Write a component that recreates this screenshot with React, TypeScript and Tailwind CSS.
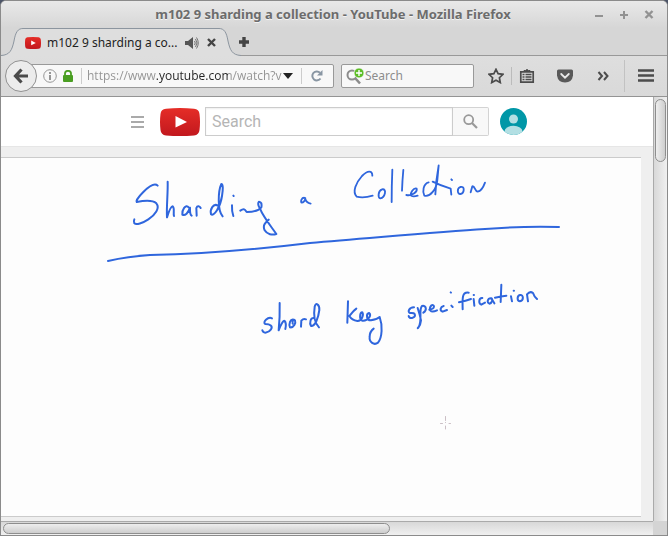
import type { ReactNode } from "react";

const ui = "font-['Noto_Sans','Open_Sans',sans-serif]";

function WindowButton({ label, children }: { label: string; children: ReactNode }) {
  return (
    <button type="button" aria-label={label} className="flex size-4 items-center justify-center">
      <svg width="12" height="12" viewBox="0 0 12 12" fill="none" stroke="#929292" strokeWidth="2">
        {children}
      </svg>
    </button>
  );
}

function TitleBar() {
  return (
    <header className="flex h-[27px] items-center bg-linear-to-b from-[#e9e9e9] to-[#d6d6d6] pr-2.5">
      <h1 className="min-w-0 flex-1 truncate pl-[74px] text-center text-[13px] font-bold text-[#6c6c6c] [text-shadow:0_1px_0_#f4f4f4]">
        m102 9 sharding a collection - YouTube - Mozilla Firefox
      </h1>
      <div className="flex gap-[9px]">
        <WindowButton label="Minimize">
          <path d="M2 7h8" />
        </WindowButton>
        <WindowButton label="Maximize">
          <path d="M2 6h8M6 2v8" />
        </WindowButton>
        <WindowButton label="Close">
          <path d="M2.500 2l7 7M9.500 2l-7 7" strokeWidth="2.400" />
        </WindowButton>
      </div>
    </header>
  );
}

function PlayBadge({ className }: { className: string }) {
  return (
    <svg className={className} viewBox="0 0 40 28" preserveAspectRatio="none" aria-hidden="true">
      <defs>
        <linearGradient id="badge" x1="0" y1="0" x2="0" y2="1">
          <stop offset="0" stopColor="#e52d27" />
          <stop offset="1" stopColor="#c2181e" />
        </linearGradient>
      </defs>
      <path
        d="M6 .7Q20-.5 34 .7Q39 1 39.500 6Q40.500 14 39.500 22Q39 27 34 27.400Q20 28.500 6 27.400Q1 27 .5 22Q-.5 14 .5 6Q1 1 6 .7Z"
        fill="url(#badge)"
      />
      <path d="M15.500 8L27 14L15.500 19.500Z" fill="#fff" />
    </svg>
  );
}

function TabStrip() {
  return (
    <div className="flex h-7 items-end border-b border-[#999] bg-[#d6d6d6]">
      <div className="-mb-px flex h-7 items-stretch">
        <svg width="22" height="28" viewBox="0 0 22 28" aria-hidden="true">
          <path d="M0 27.500C9 27 11 22 13 13C14.500 4 17 .5 22 .5V28H0Z" fill="#dedede" />
          <path d="M0 27.500C9 27 11 22 13 13C14.500 4 17 .5 22 .5" fill="none" stroke="#8c959f" />
        </svg>
        <div className="flex w-[196px] items-center border-t border-[#8c959f] bg-[#dedede] pl-0.5">
          <PlayBadge className="h-3 w-4 shrink-0" />
          <span className="ml-1.5 w-[132px] shrink-0 truncate text-xs text-[#222]">m102 9 sharding a co...</span>
          <button type="button" aria-label="Mute tab" className="ml-1.5 shrink-0">
            <svg width="14" height="14" viewBox="0 0 14 14" fill="none" stroke="#666">
              <path d="M0 5h3l5-4v12L3 9H0Z" fill="#555" stroke="none" />
              <path d="M9.500 5q1.500 2 0 4M10.500 3q3 4 0 8M11.500 1.500q3.500 5.500 0 11" strokeWidth=".9" />
            </svg>
          </button>
          <button type="button" aria-label="Close tab" className="ml-2 shrink-0">
            <svg width="9" height="9" viewBox="0 0 9 9" stroke="#444" strokeWidth="2.400">
              <path d="M1 1l7 7M8 1L1 8" />
            </svg>
          </button>
        </div>
        <svg width="22" height="28" viewBox="0 0 22 28" aria-hidden="true">
          <path d="M22 27.500C13 27 11 22 9 13C7.500 4 5 .5 0 .5V28H22Z" fill="#dedede" />
          <path d="M22 27.500C13 27 11 22 9 13C7.500 4 5 .5 0 .5" fill="none" stroke="#8c959f" />
        </svg>
      </div>
      <button type="button" aria-label="New tab" className="-ml-0.5 mb-2">
        <svg width="10" height="10" viewBox="0 0 10 10" stroke="#444" strokeWidth="3.400">
          <path d="M5 0v10M0 5h10" />
        </svg>
      </button>
    </div>
  );
}

function ToolButton({ label, className, children }: { label: string; className: string; children: ReactNode }) {
  return (
    <button type="button" aria-label={label} className={className}>
      <svg width="16" height="16" viewBox="0 0 16 16" fill="none" stroke="#4c4c4c">
        {children}
      </svg>
    </button>
  );
}

function Toolbar() {
  return (
    <nav className="flex h-[41px] items-center border-b border-[#949494] bg-linear-to-b from-[#dedede] to-[#d9d9d9] pr-[13px] pl-1">
      <button
        type="button"
        aria-label="Back"
        className="z-10 flex size-8 shrink-0 items-center justify-center rounded-full border border-[#919191] bg-[#ececec]"
      >
        <svg width="16" height="16" viewBox="0 0 16 16" fill="none" stroke="#4a4a4a" strokeWidth="3.200">
          <path d="M8.500 1.500L2.500 8l6 6.500M3 8h12" />
        </svg>
      </button>
      <div className="-ml-2 flex h-6 min-w-0 flex-1 items-center rounded-r-xs border border-[#999] bg-[#f8f8f8] pl-[13px]">
        <button type="button" aria-label="Site information" className="shrink-0">
          <svg width="14" height="14" viewBox="0 0 14 14" fill="none" stroke="#969696">
            <circle cx="7" cy="7" r="6.300" />
            <path d="M7 6v5M7 3v2" strokeWidth="2" />
          </svg>
        </button>
        <svg className="ml-1.5 shrink-0" width="10" height="12" viewBox="0 0 10 12" aria-hidden="true">
          <path d="M2 6V3.500a3 2.700 0 0 1 6 0V6" fill="none" stroke="#4a9e22" strokeWidth="1.800" />
          <rect y="5" width="10" height="7" rx="1" fill="#4a9e22" />
        </svg>
        <span className="mr-[5px] ml-2 h-4 w-px shrink-0 bg-[#ccc]" />
        <input
          aria-label="Address"
          readOnly
          value="https://www.youtube.com/watch?v"
          className="min-w-0 flex-1 bg-[linear-gradient(90deg,#929292_69px,#222_69px,#222_141px,#929292_141px)] bg-clip-text font-['Open_Sans','Noto_Sans',sans-serif] text-xs text-transparent outline-none"
        />
        <button type="button" aria-label="Show history" className="shrink-0">
          <svg width="10" height="6" viewBox="0 0 10 6">
            <path d="M0 0h10L5 6Z" fill="#222" />
          </svg>
        </button>
        <span className="mr-[9px] ml-2 h-4 w-px shrink-0 bg-[#ccc]" />
        <button type="button" aria-label="Reload" className="mr-2.5 shrink-0">
          <svg width="12" height="12" viewBox="0 0 12 12" fill="none" stroke="#8996a3" strokeWidth="2">
            <path d="M9.500 8.500A4.500 4.500 0 1 1 9 2.700" />
            <path d="M11.500 0v5.500H6Z" fill="#8996a3" stroke="none" />
          </svg>
        </button>
      </div>
      <label className="ml-[7px] flex h-6 w-[133px] shrink-0 items-center rounded-xs border border-[#999] bg-[#f8f8f8] pl-1">
        <svg width="18" height="17" viewBox="0 0 18 17" fill="none" aria-hidden="true">
          <path d="M9.500 10.500L14 15.500" stroke="#8c8c8c" strokeWidth="2.600" />
          <circle cx="6" cy="7" r="4.500" stroke="#8c8c8c" strokeWidth="2" />
          <circle cx="13" cy="5" r="5" fill="#5cbd25" stroke="#f8f8f8" strokeWidth=".8" />
          <path d="M13 2v6M10 5h6" stroke="#fff" strokeWidth="1.400" />
        </svg>
        <input
          aria-label="Search the web"
          placeholder="Search"
          className="min-w-0 flex-1 pl-px text-xs outline-none placeholder:text-[#8d8d8d]"
        />
      </label>
      <ToolButton label="Bookmark this page" className="ml-3.5 shrink-0">
        <path d="M8 1.300l2.100 4.400 4.900.6-3.600 3.400.9 4.900L8 12.300l-4.300 2.300.9-4.900L1 6.300l4.900-.6Z" strokeWidth="1.700" />
      </ToolButton>
      <span className="mx-[7px] h-[18px] w-px shrink-0 bg-[#bbb]" />
      <ToolButton label="Bookmarks" className="shrink-0">
        <path d="M1.800 3.800h12.400v10.400H1.800Z" strokeWidth="1.700" />
        <path d="M5 4V2.500h1.500Q8 .5 9.500 2.500H11V4" fill="#4c4c4c" />
        <path d="M3.500 6.500h2M6.500 6.500h6M3.500 9h2M6.500 9h6M3.500 11.500h2M6.500 11.500h6" strokeWidth="1.300" />
      </ToolButton>
      <ToolButton label="Pocket" className="ml-[22px] shrink-0">
        <path d="M1.500 1.500h13q1.500 0 1.500 1.500v4.500q-1 7-8 7t-8-7V3q0-1.500 1.500-1.500Z" fill="#595959" stroke="none" />
        <path d="M4.200 6L8 9.700L11.800 6" stroke="#e8e8e8" strokeWidth="1.800" strokeLinecap="round" />
      </ToolButton>
      <ToolButton label="More tools" className="ml-[22px] shrink-0">
        <path d="M3.500 4L7 8l-3.500 4M9 4l3.500 4L9 12" strokeWidth="2" />
      </ToolButton>
      <span className="mx-[13px] h-8 w-px shrink-0 bg-[#c2c2c2]" />
      <ToolButton label="Open menu" className="shrink-0">
        <path d="M0 2.500h16M0 7.500h16M0 12.500h16" strokeWidth="2.600" />
      </ToolButton>
    </nav>
  );
}

function SiteHeader() {
  return (
    <div className="flex h-[50px] shrink-0 items-center border-b border-[#e6e6e6] bg-white pl-[130px]">
      <button type="button" aria-label="Guide" className="flex w-[13px] flex-col gap-[3px]">
        <span className="h-0.5 bg-[#aaa]" />
        <span className="h-0.5 bg-[#aaa]" />
        <span className="h-0.5 bg-[#aaa]" />
      </button>
      <a href="#home" aria-label="YouTube home" className="ml-4 shrink-0">
        <PlayBadge className="h-7 w-10" />
      </a>
      <form className="ml-[5px] flex h-[29px] w-[284px]" onSubmit={(event) => event.preventDefault()}>
        <input
          aria-label="Search videos"
          placeholder="Search"
          className="min-w-0 flex-1 border border-[#ccc] pl-1.5 font-[Roboto,sans-serif] text-base shadow-[inset_0_1px_2px_#eee] outline-none placeholder:text-[#b5b5b5]"
        />
        <button
          type="submit"
          aria-label="Search"
          className="flex w-9 items-center justify-center rounded-r-xs border border-l-0 border-[#d3d3d3] bg-[#f8f8f8]"
        >
          <svg width="15" height="15" viewBox="0 0 15 15" fill="none" stroke="#999">
            <circle cx="5.700" cy="5.700" r="4.500" strokeWidth="1.800" />
            <path d="M9 9l5 5" strokeWidth="2.200" />
          </svg>
        </button>
      </form>
      <button type="button" aria-label="Account" className="ml-[11px] shrink-0">
        <svg width="27" height="27" viewBox="0 0 27 27">
          <clipPath id="face">
            <circle cx="13.500" cy="13.500" r="13.500" />
          </clipPath>
          <g clipPath="url(#face)">
            <path d="M0 0h27v27H0Z" fill="#0097a7" />
            <circle cx="13.500" cy="11" r="4.500" fill="#b2dfe3" />
            <ellipse cx="13.500" cy="23.500" rx="9" ry="5.800" fill="#b2dfe3" />
          </g>
        </svg>
      </button>
    </div>
  );
}

function Whiteboard() {
  return (
    <svg
      className="block shrink-0"
      width="640"
      height="358"
      viewBox="1 158 640 358"
      fill="none"
      stroke="#2f66dd"
      strokeLinecap="round"
      strokeLinejoin="round"
      role="img"
      aria-label="Sharding a Collection: shard key specification"
    >
      <g transform="translate(100 160) scale(.33333)" strokeWidth="6">
        <path d="M173 77C165 69 148 78 130 96C116 110 107 123 110 126C125 123 155 117 169 130C181 144 165 165 145 178C127 190 109 195 103 190Q100 184 103 178" />
        <path d="M203 65C204 100 199 142 201 172C207 153 212 139 218 139C225 144 219 160 222 168" />
        <path d="M266 142C257 130 245 151 247 164C255 169 265 158 270 143C270 153 269 164 275 167M290 167L289 144C292 136 299 138 302 144" />
        <path d="M354 137C340 128 329 149 333 163C342 170 361 142 366 108C369 90 370 72 364 72C354 94 352 151 368 169M396 136Q395 154 400 168M401 108L400 107" />
        <path d="M421 152C434 143 436 151 440 156C454 156 474 154 484 142Q487 126 477 125Q471 132 480 146C490 171 511 196 529 222C517 226 501 223 494 211C487 196 496 188 506 179" />
      </g>
      <path
        d="M108 261C121 258 134 256 150 255C205 254 261 249 310 243C374 238 435 232 485 229Q522 226 559 227"
        strokeWidth="2"
      />
      <g transform="translate(280 150) scale(.33333)" strokeWidth="5.500">
        <path d="M76 144C64 140 61 157 65 158Q73 157 76 147Q79 158 92 161" />
        <path d="M277 77C277 61 263 60 246 78C228 98 216 126 230 140Q251 145 278 137M306 118C294 122 293 143 301 145C315 143 322 115 306 118M337 59Q335 106 335 156M370 60Q367 92 366 122" />
        <path d="M379 135C395 139 413 125 410 116C401 112 389 130 394 137Q400 141 413 137M446 97C429 101 427 126 433 137C450 142 470 118 472 90L476 46Q468 90 466 133M458 95Q482 107 512 116M514 88L516 90M512 116L514 134" />
        <path d="M541 111C529 116 533 133 541 132C553 131 556 107 541 111M572 127L577 109C585 107 584 124 593 125Q606 123 615 98" />
      </g>
      <g transform="translate(250 275) scale(.33333)" strokeWidth="6">
        <path d="M66 130C54 124 36 142 46 147C61 147 69 153 63 163C55 174 40 177 37 166M89 84Q90 125 86 166C91 151 100 135 104 138Q110 145 106 162" />
        <path d="M132 134C120 130 116 148 120 157C132 159 138 144 135 136C132 133 126 135 128 146M153 155L154 137Q160 130 168 133M194 130C181 125 178 145 183 153C196 154 205 128 208 105C209 88 196 80 194 96C190 121 195 145 207 157" />
        <path d="M294 79L292 143M319 101C308 109 302 119 298 123Q306 136 322 138C335 139 342 120 337 112C329 112 327 136 337 137C354 139 367 119 357 114C347 117 350 137 363 136Q380 134 389 126C398 151 397 187 384 203C372 212 357 202 359 185Q359 170 371 161" />
      </g>
      <g transform="translate(390 270) scale(.33333)" strokeWidth="6">
        <path d="M72 112C56 113 52 126 60 129Q75 127 75 136C75 144 58 148 56 138M83 114Q90 136 93 151C91 172 77 180 86 171C98 150 85 119 96 108C110 105 111 121 100 128" />
        <path d="M118 119C137 117 134 102 124 106C115 118 120 131 141 121M161 108C151 110 148 122 158 125L171 120M184 107L188 111M182 67L183 68" />
        <path d="M236 68C216 65 217 84 218 118M207 97Q228 92 243 87M251 87L253 107M251 75L252 75M277 84C266 83 265 101 274 104L285 98M304 85C292 84 290 98 298 101C307 99 309 86 304 85L313 100M334 44L332 96M315 83Q334 78 349 77M363 79L366 94M371 62L372 62M390 75C380 78 381 94 390 94C402 92 401 73 390 75M414 94L411 73Q420 62 429 69Q432 79 441 87" />
      </g>
      <path d="M445.500 416.500v4M445.500 422.500h.1M445.500 426v3M440.500 423.500h2M449 423.500h1.500" stroke="#cbbfc5" />
    </svg>
  );
}

export default function App() {
  return (
    <div className="bg-[#4d5568]">
      <div
        className={`flex h-screen min-h-0 flex-col overflow-hidden rounded-t-md border border-[#8b8b8b] bg-[#efefef] ${ui}`}
      >
        <TitleBar />
        <TabStrip />
        <Toolbar />
        <div className="flex min-h-0 flex-1">
          <main className="flex min-w-0 flex-1 flex-col overflow-hidden bg-[#efefef]">
            <SiteHeader />
            <section className="mt-2.5 mr-3 mb-1 min-h-0 flex-1 overflow-hidden border-y border-[#cbcbcb] bg-[#fdfdfd]">
              <Whiteboard />
            </section>
          </main>
          <div className="w-3.5 shrink-0 border-l border-[#aaa] bg-linear-to-r from-[#d8d8d8] to-[#f0f0f0] pt-0.5 pl-px">
            <div className="h-[63px] w-[11px] rounded-full border border-[#8e8e8e] bg-linear-to-r from-[#eee] to-[#cecece]" />
          </div>
        </div>
        <div className="flex h-3.5 shrink-0 bg-[#d4d4d4]">
          <div className="mr-3.5 flex-1 border-t border-[#aaa] bg-linear-to-b from-[#d8d8d8] to-[#f0f0f0] pt-px pl-0.5">
            <div className="h-[11px] w-[387px] max-w-full rounded-full border border-[#8e8e8e] bg-linear-to-b from-[#eee] to-[#cecece]" />
          </div>
        </div>
      </div>
    </div>
  );
}
